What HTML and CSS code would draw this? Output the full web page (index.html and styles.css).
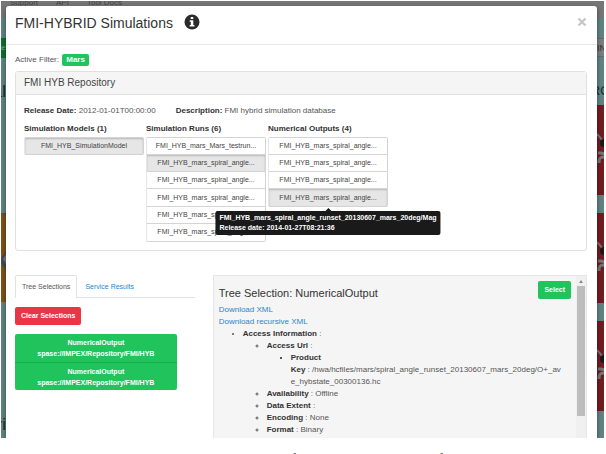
FILE: index.html
```html
<!DOCTYPE html>
<html lang="en">
<head>
<meta charset="utf-8">
<title>FMI-HYBRID Simulations</title>
<link rel="stylesheet" href="styles.css">
</head>
<body>
<figure class="figure">
  <div class="screen">
    <nav class="nav"><a href="#">Support</a><a href="#">API</a><a href="#">Tool Docs</a></nav>
    <div class="stage">
      <div class="strip strip-left">
        <div class="bar"></div>
        <div class="gap-small"></div>
        <div class="go">e</div>
        <div class="words words-left">al</div>
        <div class="tile-brown"><svg viewBox="0 0 5 89" width="5" height="89"><path d="M5 38 0 45v5l5 7z" fill="#444b52"/><path d="M2 0h3v3z" fill="#40525a"/><path d="M5 41 2 46l3 5z" fill="#75797c"/></svg></div>
        <div class="words words-foot">ri</div>
      </div>
      <section class="modal" role="dialog" aria-labelledby="title">
        <header class="modal-head">
          <h1 id="title">FMI-HYBRID Simulations</h1>
          <svg class="info" viewBox="0 0 16 16" width="16" height="16" aria-hidden="true"><circle cx="8" cy="8" r="7.5" fill="#2b2b2b"/><path d="M6.7 3h2.6v2H6.7zM5.7 6.3h3.6v4.6h1.1v1.6H5.7v-1.6h1.1V7.8H5.7z" fill="#fff"/></svg>
          <button class="close" aria-label="Close"><svg viewBox="0 0 10 10" width="10" height="10"><path d="m1.5 1.5 7 7m0-7-7 7" stroke="#c6c6c6" stroke-width="2.2"/></svg></button>
        </header>
        <div class="modal-body">
          <p class="filter">Active Filter: <span class="label">Mars</span></p>
          <section class="panel">
            <h2 class="panel-head">FMI HYB Repository</h2>
            <div class="panel-body">
              <p class="meta"><span><b>Release Date:</b> 2012-01-01T00:00:00</span><span><b>Description:</b> FMI hybrid simulation database</span></p>
              <div class="columns">
                <div>
                  <h3>Simulation Models (1)</h3>
                  <div class="list"><button class="item active">FMI_HYB_SimulationModel</button></div>
                </div>
                <div>
                  <h3>Simulation Runs (6)</h3>
                  <div class="list list-runs">
                    <button class="item">FMI_HYB_mars_Mars_testrun...</button>
                    <button class="item active">FMI_HYB_mars_spiral_angle...</button>
                    <button class="item">FMI_HYB_mars_spiral_angle...</button>
                    <button class="item">FMI_HYB_mars_spiral_angle...</button>
                    <button class="item">FMI_HYB_mars_spiral_angle...</button>
                    <button class="item">FMI_HYB_mars_spiral_angle...</button>
                  </div>
                </div>
                <div>
                  <h3>Numerical Outputs (4)</h3>
                  <div class="list list-outputs">
                    <button class="item">FMI_HYB_mars_spiral_angle...</button>
                    <button class="item">FMI_HYB_mars_spiral_angle...</button>
                    <button class="item">FMI_HYB_mars_spiral_angle...</button>
                    <button class="item active">FMI_HYB_mars_spiral_angle...</button>
                    <div class="tooltip" role="tooltip">FMI_HYB_mars_spiral_angle_runset_20130607_mars_20deg/Mag<br>Release date: 2014-01-27T08:21:36</div>
                  </div>
                </div>
              </div>
            </div>
          </section>
          <div class="lower">
            <section>
              <div class="tabs"><a class="tab current" href="#">Tree Selections</a><a class="tab" href="#">Service Results</a></div>
              <button class="btn btn-red">Clear Selections</button>
              <div class="selections">
                <button>NumericalOutput<br>spase://IMPEX/Repository/FMI/HYB</button>
                <button>NumericalOutput<br>spase://IMPEX/Repository/FMI/HYB</button>
              </div>
            </section>
            <section class="well">
              <div class="well-content">
                <div class="well-head"><h2>Tree Selection: NumericalOutput</h2><button class="btn btn-green">Select</button></div>
                <a class="download" href="#">Download XML</a>
                <a class="download" href="#">Download recursive XML</a>
                <ul class="tree">
                  <li><b>Access Information</b> :
                    <ul>
                      <li><b>Access Url</b> :
                        <ul><li><b>Product<br>Key</b> : /hwa/hcfiles/mars/spiral_angle_runset_20130607_mars_20deg/O+_av<br>e_hybstate_00300136.hc</li></ul>
                      </li>
                      <li><b>Availability</b> : Offline</li>
                      <li><b>Data Extent</b> :</li>
                      <li><b>Encoding</b> : None</li>
                      <li><b>Format</b> : Binary</li>
                    </ul>
                  </li>
                </ul>
              </div>
              <div class="scrollbar"><svg viewBox="0 0 10 10" width="10" height="10"><path d="m3 7 2-3 2 3z" fill="#8a8a8a"/></svg><div class="thumb"></div></div>
            </section>
          </div>
        </div>
      </section>
      <div class="strip strip-right">
        <div class="bar"></div>
        <div class="gap-small"></div>
        <div class="box">IN</div>
        <div class="words words-right">RO</div>
        <div class="tile-red"><svg viewBox="0 0 7 90" width="7" height="90"><path d="m0 29 7 8" stroke="#747474" stroke-width="2"/><circle cx="7" cy="38" r="4" fill="#191919"/><path d="M1 48h3l4 1M2 58c0-5 1-6 5-6" stroke="#777" stroke-width="3" fill="none"/></svg></div>
        <div class="tile-red"><svg viewBox="0 0 7 90" width="7" height="90"><path d="m0 29 7 8" stroke="#747474" stroke-width="2"/><circle cx="7" cy="38" r="4" fill="#191919"/><path d="M1 48h3l4 1M2 58c0-5 1-6 5-6" stroke="#777" stroke-width="3" fill="none"/></svg></div>
        <div class="tile-red"><svg viewBox="0 0 7 90" width="7" height="90"><path d="m0 29 7 8" stroke="#747474" stroke-width="2"/><circle cx="7" cy="38" r="4" fill="#191919"/><path d="M1 48h3l4 1M2 58c0-5 1-6 5-6" stroke="#777" stroke-width="3" fill="none"/></svg></div>
      </div>
    </div>
  </div>
  <figcaption>Fig. 3. Simulation database of the numerical outputs unfolded.</figcaption>
</figure>
</body>
</html>
```
FILE: styles.css
```css
* { box-sizing: border-box; }
html { overflow: hidden; }
body { margin: 0; background: #fff; font: 8px/12px "Liberation Sans", Arial, sans-serif; color: #555; }
h1, h2, h3, p, ul { margin: 0; padding: 0; font-weight: normal; }
a { color: #2a86cc; text-decoration: none; }
b { color: #333; }
button { font: inherit; cursor: pointer; }
svg { display: block; }

.figure { margin: 0; padding: 1px 2px 0 1px; }
figcaption { margin-top: 12px; text-align: center; font: 14px/20px "Liberation Serif", serif; color: #222; }

.screen { overflow: hidden; background: #5f8583; }
.nav { display: flex; gap: 18px; height: 5px; padding-left: 9px; background: #777; line-height: 4px; }
.nav a { color: #444; }
.stage { display: flex; }

.strip { flex: none; display: flex; flex-direction: column; overflow: hidden; color: #1d2929; }
.strip-left { width: 5px; }
.strip-right { width: 7px; }
.bar { height: 12px; background: #777; }
.gap-small { height: 20px; }
.go { height: 20px; background: #0d6e2c; color: #7fa88a; line-height: 20px; }
.box { height: 19px; background: #7e7e7e; border: solid #606d6c; border-width: 1px 0; color: #333; font-size: 9px; line-height: 18px; }
.words { white-space: nowrap; display: flex; justify-content: flex-end; }
.words-left { height: 155px; font-size: 17px; line-height: 68px; }
.words-foot { font-size: 17px; line-height: 20px; margin-top: 113px; }
.words-right { height: 48px; justify-content: center; font-size: 13px; line-height: 68px; }
.tile-brown { height: 89px; background: #7d5316; }
.tile-red { height: 90px; margin-bottom: 18px; background: #751b22; }

.modal { position: relative; flex: 1; min-width: 0; background: #fff; border-radius: 3px 3px 0 0; box-shadow: 0 2px 5px rgba(0, 0, 0, .45); }
.modal-head { display: flex; align-items: center; gap: 11px; height: 39px; padding: 0 10px 6px 9px; border-bottom: 1px solid #e8e8e8; }
.modal-head h1 { font-size: 14px; line-height: 24px; padding-top: 2px; color: #333; }
.close { margin-left: auto; padding: 0; border: 0; background: none; }
.modal-body { padding: 9px 10px 0 9px; }
.filter { height: 17px; line-height: 12px; }
.label { display: inline-block; margin-left: 1px; padding: 0 4px; border-radius: 2px; background: #20c35c; color: #fff; font-weight: bold; }

.panel { border: 1px solid #e0e0e0; border-radius: 3px; }
.panel-head { padding: 0 8px; background: #f5f5f5; border-bottom: 1px solid #e0e0e0; font-size: 10px; line-height: 22px; color: #444; }
.panel-body { padding: 10px 8px 8px; }
.meta { display: flex; gap: 20px; line-height: 12px; }
.columns { display: flex; gap: 2px; margin-top: 6px; }
.columns > div { width: 120px; }
h3 { font-size: 8px; line-height: 12px; font-weight: bold; color: #333; margin-bottom: 2px; }
.list { position: relative; display: grid; grid-auto-rows: 1fr; min-height: 18px; border: 1px solid #d4d4d4; border-left-color: #e6e6e6; border-radius: 2px; }
.list-runs { height: 105px; }
.list-outputs { height: 70px; }
.item { padding: 0; border: 0; border-bottom: 1px solid #d4d4d4; background: #fff; color: #444; font-size: 7px; line-height: 14px; }
.item.active { background: #e6e6e6; box-shadow: inset 0 1px 2px rgba(0, 0, 0, .2); }
.item:last-of-type { border-bottom: 0; }
.tooltip { position: absolute; top: 73px; left: 50%; transform: translateX(-50%); padding: 2px 4px; border-radius: 2px; background: #1a1a1a; color: #fff; font-size: 7px; line-height: 10px; font-weight: bold; white-space: nowrap; }
.tooltip::before { content: ""; position: absolute; top: -3px; left: 50%; margin-left: -3px; border: solid transparent; border-width: 0 3px 3px; border-bottom-color: #1a1a1a; }

.lower { display: grid; grid-template-columns: 180fr 375fr; gap: 18px; margin-top: 24px; }
.tabs { display: flex; border-bottom: 1px solid #e2e2e2; font-size: 7px; line-height: 21px; }
.tab { padding: 0 7px; border: 1px solid transparent; border-bottom: 0; }
.tab.current { margin-bottom: -1px; padding: 0 6px; border-color: #e2e2e2; border-radius: 2px 2px 0 0; background: #fff; color: #555; }
.btn { height: 18px; padding: 0 6px; border: 0; border-radius: 2px; color: #fff; font-size: 7px; font-weight: bold; }
.btn-red { display: block; margin-top: 9px; background: #e93545; }
.btn-green { background: #20c35c; }
.selections { width: 90%; margin-top: 9px; border-radius: 2px; overflow: hidden; }
.selections button { display: block; width: 100%; height: 28px; padding: 0; border: 0; background: #20c35c; color: #fff; font-size: 7px; line-height: 11px; font-weight: bold; }
.selections button + button { border-top: 1px solid #14ad4c; }

.well { display: flex; border: 1px solid #e6e6e6; border-bottom: 0; background: #f5f5f5; }
.well-content { flex: 1; min-width: 0; padding: 5px 0 2px 5px; }
.well-head { display: flex; justify-content: space-between; height: 23px; padding-right: 5px; }
.well-head h2 { font-size: 11px; line-height: 24px; color: #333; }
.download { display: block; }
.tree, .tree ul { padding-left: 24px; }
.tree { white-space: nowrap; }
.scrollbar { width: 10px; background: #f0f0f0; }
.thumb { height: 130px; margin: 0 1px; background: #bdbdbd; }
```
